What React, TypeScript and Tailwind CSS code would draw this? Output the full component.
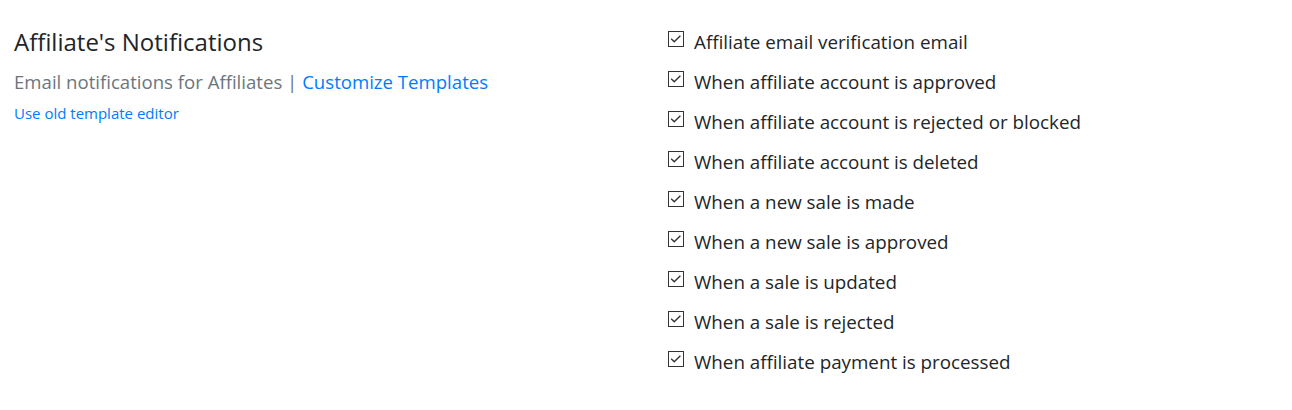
import React from 'react';

const notifications = [
  'Affiliate email verification email',
  'When affiliate account is approved',
  'When affiliate account is rejected or blocked',
  'When affiliate account is deleted',
  'When a new sale is made',
  'When a new sale is approved',
  'When a sale is updated',
  'When a sale is rejected',
  'When affiliate payment is processed',
];

function CheckBox() {
  return (
    <span className="mt-[9px] block h-[16px] w-[16px] shrink-0 border border-[#333] bg-white">
      <svg viewBox="0 0 14 14" className="h-[14px] w-[14px]" fill="none" stroke="#333" strokeWidth="1.4">
        <path d="M2.2 6.8 L5.2 9.8 L11.4 3.8" />
      </svg>
    </span>
  );
}

export default function App() {
  return (
    <div className="grid grid-cols-2 bg-white pt-[22px] text-[#212529]" style={{ fontFamily: '"Open Sans", "Noto Sans", sans-serif' }}>
      {/* Left: title and links */}
      <div className="pl-[14px]">
        <h2 className="text-[24px] leading-[40px] font-normal">Affiliate's Notifications</h2>
        <p className="text-[18.6px] leading-[40px] text-[#6c757d]">
          Email notifications for Affiliates |{' '}
          <a href="#" className="text-[#007bff]">Customize Templates</a>
        </p>
        <a href="#" className="block text-[15px] leading-[22px] text-[#007bff]">
          Use old template editor
        </a>
      </div>

      {/* Right: notification checkboxes */}
      <div className="pl-[22px]">
        {notifications.map((label) => (
          <label key={label} className="flex h-[40px] items-start gap-[10px] text-[18.8px] leading-[40px]">
            <CheckBox />
            <span>{label}</span>
          </label>
        ))}
      </div>
    </div>
  );
}
